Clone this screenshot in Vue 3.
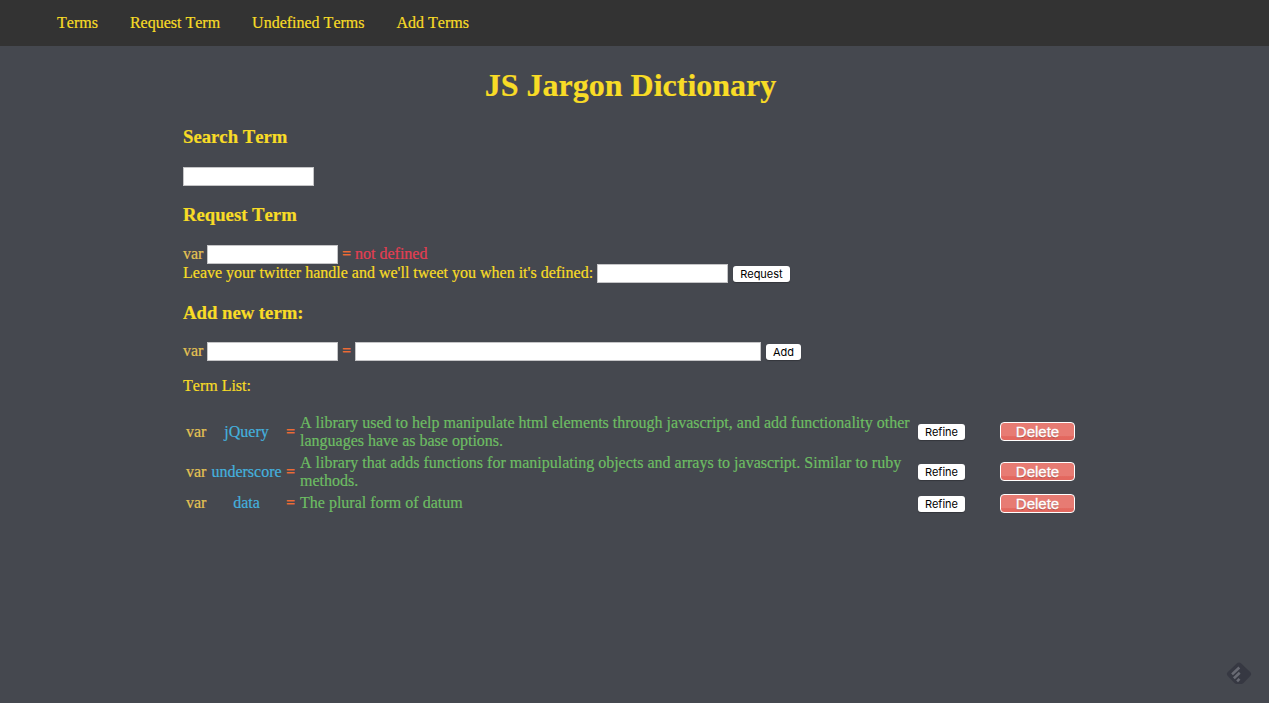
<script setup>
import { ref } from 'vue'

const links = ['Terms', 'Request Term', 'Undefined Terms', 'Add Terms']
const search = ref('')
const requested = ref('')
const handle = ref('')
const newTerm = ref('')
const newDefinition = ref('')
const terms = [
  {
    name: 'jQuery',
    definition:
      'A library used to help manipulate html elements through javascript, and add functionality other languages have as base options.',
  },
  {
    name: 'underscore',
    definition:
      'A library that adds functions for manipulating objects and arrays to javascript. Similar to ruby methods.',
  },
  { name: 'data', definition: 'The plural form of datum' },
]
</script>

<template>
  <div class="page">
    <nav class="nav">
      <a v-for="link in links" :key="link">{{ link }}</a>
    </nav>
    <main class="content">
      <h1>JS Jargon Dictionary</h1>

      <h3>Search Term</h3>
      <div class="line"><input v-model="search" type="text" /></div>

      <h3 class="request-heading">Request Term</h3>
      <div class="line">
        <span class="var">var</span>
        <input v-model="requested" type="text" />
        <span class="eq">=</span>
        <span class="missing">not defined</span>
      </div>
      <div class="line">
        <span class="label">Leave your twitter handle and we'll tweet you when it's defined:</span>
        <input v-model="handle" type="text" />
        <button class="btn request">Request</button>
      </div>

      <h3 class="add-heading">Add new term:</h3>
      <div class="line">
        <span class="var">var</span>
        <input v-model="newTerm" type="text" />
        <span class="eq">=</span>
        <input v-model="newDefinition" class="wide" type="text" />
        <button class="btn add">Add</button>
      </div>

      <p>Term List:</p>
      <div class="terms">
        <div v-for="term in terms" :key="term.name" class="term">
          <span class="var">var</span>
          <span class="name">{{ term.name }}</span>
          <span class="eq">=</span>
          <span class="definition">{{ term.definition }}</span>
          <button class="btn refine">Refine</button>
          <button class="delete">Delete</button>
        </div>
      </div>
    </main>
    <svg class="badge" viewBox="0 0 26 24" width="26" height="24">
      <path d="M10.8 1.4Q13 -.6 15.200 1.4L24.200 10Q26 12 24.200 14L17.500 21Q16.500 22 15 22H11Q9.500 22 8.500 21L1.800 14Q0 12 1.800 10Z" fill="#363842" />
      <g stroke="#686a73" stroke-width="2.600" stroke-linecap="square">
        <path d="M7 11.500L12.400 6.400" />
        <path d="M8.800 15.400L12.800 11.600" />
        <path d="M12 18.400L12.600 17.800" />
      </g>
    </svg>
  </div>
</template>

<style>
body {
  margin: 0;
  background: #45484f;
}
</style>

<style scoped>
.page {
  height: 703px;
  overflow: hidden;
  background: #45484f;
  color: #f8dc26;
  font: 16px/18px "Liberation Serif", "Times New Roman", serif;
  font-kerning: none;
  -webkit-text-stroke: 0.2px;
}
.nav {
  display: flex;
  gap: 32px;
  box-sizing: border-box;
  height: 46px;
  padding: 14px 57px;
  background: #333;
}
.content {
  width: 895px;
  margin: 0 auto;
  padding-right: 8px;
}
h1 {
  margin: 20px 0 22px;
  font-size: 32px;
  line-height: 38px;
  text-align: center;
}
h3 {
  margin: 0 0 20px;
  font-size: 18.72px;
  line-height: 21px;
}
.request-heading {
  margin-top: 18px;
}
.add-heading {
  margin: 19px 0;
}
.line {
  display: flex;
  align-items: center;
  height: 19px;
  white-space: nowrap;
}
.line span {
  margin-bottom: 2px;
}
.line .var {
  width: 24px;
}
.line .eq {
  width: 9px;
  margin: 0 4px 1px;
}
.label {
  width: 414px;
}
.var {
  color: #e5c453;
}
.eq {
  color: #ec6b35;
  font-weight: bold;
}
.missing {
  color: #e53e52;
}
input {
  box-sizing: border-box;
  width: 131px;
  height: 19px;
  margin: 0;
  padding: 1px 3px;
  border: 1px solid #c5c5c7;
  border-radius: 0;
  background: #fff;
  outline: none;
}
.wide {
  width: 406px;
}
.btn {
  box-sizing: border-box;
  height: 16px;
  margin: 1px 0 0;
  padding: 0;
  border: 0;
  border-radius: 3px;
  background: #fff;
  box-shadow: 0 1px 1px rgba(0, 0, 0, 0.25);
  color: #000;
  font: 11px/16px Inter, Roboto, sans-serif;
  -webkit-text-stroke: 0;
}
.request {
  width: 57px;
  margin-left: 5px;
}
.add {
  width: 35px;
  margin-left: 5px;
}
p {
  margin: 16px 0 19px;
}
.terms {
  display: flex;
  flex-direction: column;
  gap: 4px;
  padding-left: 3px;
}
.term {
  display: grid;
  grid-template-columns: 25px 71px 18px 618px 82px 75px;
  align-items: center;
}
.name {
  color: #44b1de;
  text-align: center;
}
.term .eq {
  padding-left: 4px;
}
.definition {
  color: #6dbd63;
}
.refine {
  width: 47px;
  margin: 0;
}
.delete {
  box-sizing: border-box;
  width: 75px;
  height: 19px;
  margin: 0 0 1px;
  padding: 0;
  border: 1px solid #fff;
  border-radius: 4px;
  background: linear-gradient(#e77b73 75%, #e3685f 80%);
  color: #fff;
  font: 15px/17px "Liberation Sans", Arial, sans-serif;
  text-shadow: 0 1px 1px rgba(0, 0, 0, 0.3);
  -webkit-text-stroke: 0.3px;
}
.term:last-child {
  align-items: start;
}
.term:last-child .refine {
  margin-top: 2px;
}
.badge {
  position: absolute;
  left: 1226px;
  top: 662px;
}
</style>
